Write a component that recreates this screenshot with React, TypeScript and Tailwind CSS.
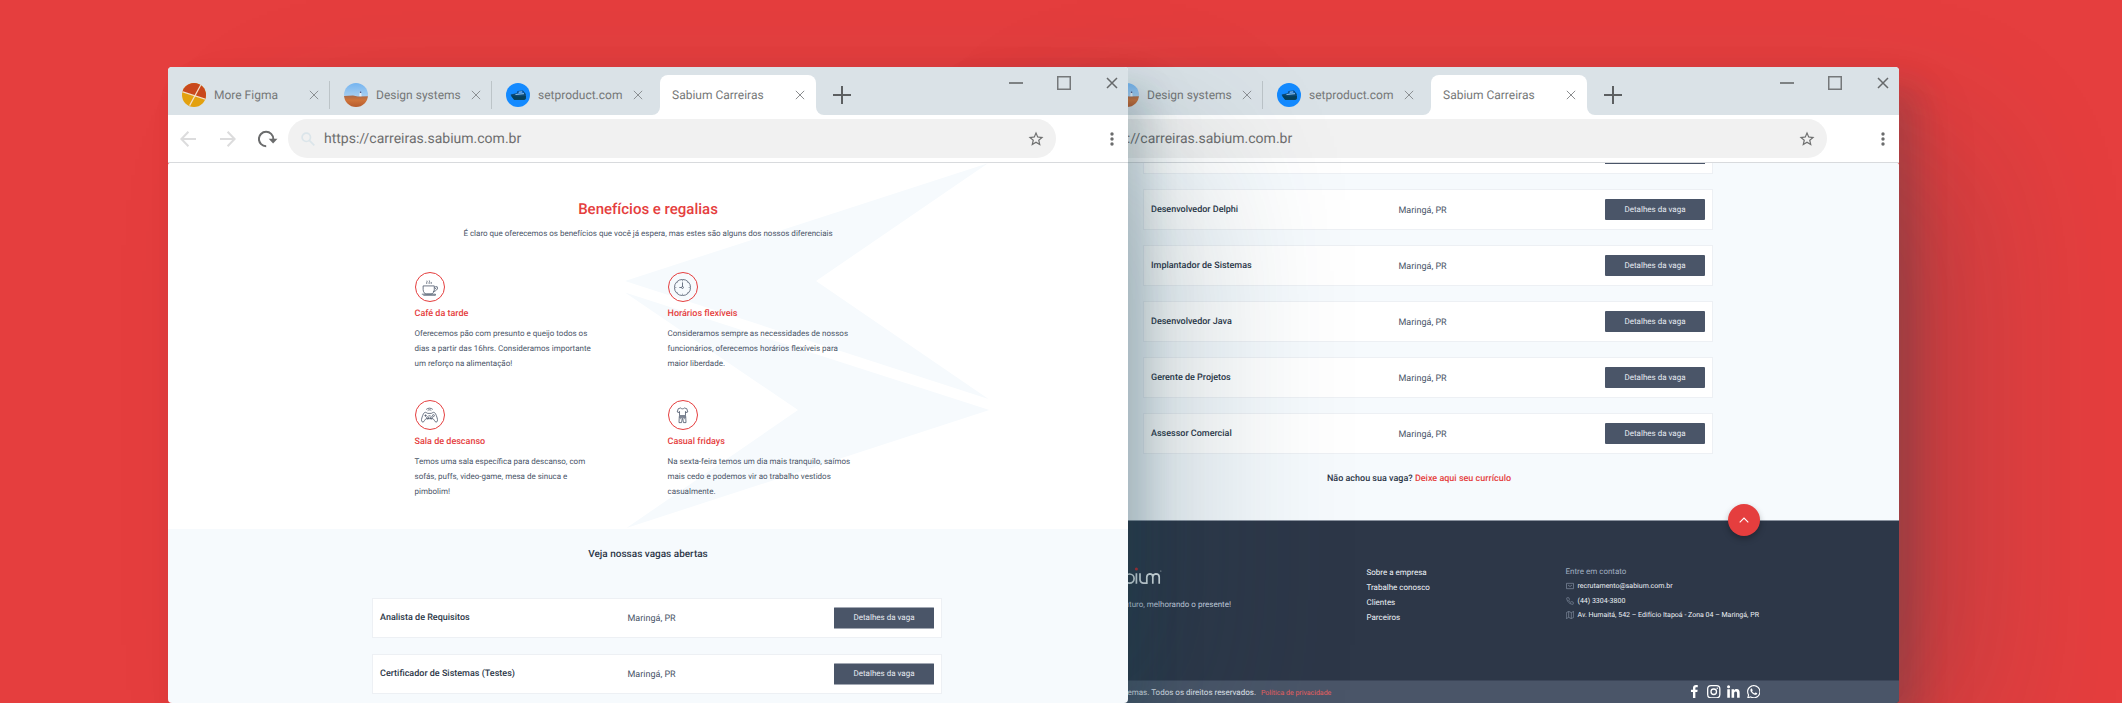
import type { ReactNode } from 'react';

function Cross({ className = '', width = 1.4 }: { className?: string; width?: number }) {
  return (
    <svg viewBox="0 0 12 12" className={`shrink-0 ${className}`} fill="none" stroke="currentColor" strokeWidth={width}>
      <path d="M1 1l10 10M11 1L1 11" />
    </svg>
  );
}

function FigmaFavicon() {
  return (
    <svg viewBox="0 0 24 24" className="h-6 w-6 shrink-0 rounded-full">
      <path fill="#e3a10f" d="M0 0h24v24H0z" />
      <path fill="#c9481d" d="M0 0h24v16.4L0 8.5z" />
      <path stroke="#f3dfc8" strokeWidth="1.2" d="M0 8.5l24 7.9M7.6 22.6L19.3 1" />
    </svg>
  );
}

function DesertFavicon() {
  return (
    <svg viewBox="0 0 24 24" className="h-6 w-6 shrink-0 rounded-full">
      <defs>
        <linearGradient id="sky" x1="0" y1="0" x2="0" y2="1">
          <stop offset="0" stopColor="#74b4f0" />
          <stop offset="1" stopColor="#a9cff0" />
        </linearGradient>
        <linearGradient id="sand" x1="0" y1="0" x2="0" y2="1">
          <stop offset="0" stopColor="#a8694a" />
          <stop offset="0.4" stopColor="#cf743b" />
          <stop offset="1" stopColor="#b65c2e" />
        </linearGradient>
      </defs>
      <path fill="url(#sky)" d="M0 0h24v14H0z" />
      <path fill="url(#sand)" d="M0 13l9-.4 5 .9 10-.2V24H0z" />
      <path fill="#e9eef5" d="M15.600 9.400h1.600l.4 3.800h-2.300z" />
      <circle cx="16.600" cy="9.200" r=".8" fill="#4b4a78" />
    </svg>
  );
}

function BoatFavicon() {
  return (
    <svg viewBox="0 0 24 24" className="h-6 w-6 shrink-0 rounded-full">
      <path fill="#148aff" d="M0 0h24v24H0z" />
      <path fill="#0b4a78" d="M4.600 11.500l6-1.300 1-2.200 5.400-.4 2.800 3.400.3 4.600-2.500 1.400H8.500z" />
      <path fill="#06405a" d="M4.600 12.200l7 1.400 8.500-.6-.8 3.800H8z" />
      <path fill="#1a6fd0" d="M11.800 8.600l4.700-.4 1.700 2.400-6.600.6z" />
      <path stroke="#b9e2ff" strokeWidth=".8" fill="none" d="M9.500 11.500l8.500-.8M13 9.200l3-.3" />
    </svg>
  );
}

function Tab({ icon, label, divider = true }: { icon: ReactNode; label: string; divider?: boolean }) {
  return (
    <div className={`flex h-7 w-[162px] shrink-0 items-center border-r pr-2.5 pl-3.5 ${divider ? 'border-[#bcc4c8]' : 'border-transparent'}`}>
      {icon}
      <span className="ml-2 flex-1 text-xs leading-[14px] whitespace-nowrap text-[#757777]">{label}</span>
      <Cross className="h-2.5 w-2.5 text-[#8b9093]" width={1.2} />
    </div>
  );
}

function Chrome() {
  return (
    <header className="flex h-24 shrink-0 flex-col overflow-hidden rounded-t-[4px] border-b border-[#d8dadd] bg-white">
      <div className="flex h-12 shrink-0 items-end bg-[#dae2e7]">
        <div className="flex h-10 items-center">
          <Tab icon={<FigmaFavicon />} label="More Figma" />
          <Tab icon={<DesertFavicon />} label="Design systems" />
          <Tab icon={<BoatFavicon />} label="setproduct.com" divider={false} />
        </div>
        <div className="-ml-0.5 h-2 w-2 bg-white">
          <div className="h-2 w-2 rounded-br-[8px] bg-[#dae2e7]" />
        </div>
        <div className="flex h-10 w-[156px] shrink-0 items-center rounded-t-[8px] bg-white pr-[11px] pl-3">
          <span className="flex-1 text-xs leading-[14px] whitespace-nowrap text-[#757777]">Sabium Carreiras</span>
          <Cross className="h-2.5 w-2.5 text-[#8b8d8f]" width={1.2} />
        </div>
        <div className="h-2 w-2 bg-white">
          <div className="h-2 w-2 rounded-bl-[8px] bg-[#dae2e7]" />
        </div>
        <svg viewBox="0 0 18 18" className="mb-[11px] ml-[9px] h-[18px] w-[18px]" stroke="#5c5f61" strokeWidth="2">
          <path d="M9 0v18M0 9h18" />
        </svg>
        <div className="mt-[9px] mr-[9px] ml-auto flex items-center gap-[34px] self-start">
          <svg viewBox="0 0 14 14" className="h-3.5 w-3.5" stroke="#7d8183" strokeWidth="1.800">
            <path d="M0 7h14" />
          </svg>
          <svg viewBox="0 0 14 14" className="h-3.5 w-3.5" fill="none" stroke="#75787a" strokeWidth="1.500">
            <path d="M.75.75h12.500v12.500H.75z" />
          </svg>
          <Cross className="m-px h-3 w-3 text-[#66696b]" width={1.5} />
        </div>
      </div>
      <div className="flex flex-1 items-center pl-3">
        <svg viewBox="0 0 16 16" className="h-4 w-4" fill="none" stroke="#dcdcdd" strokeWidth="2">
          <path d="M8.400.8L1.400 8l7 7.200M1.400 8H16" />
        </svg>
        <svg viewBox="0 0 16 16" className="ml-6 h-4 w-4" fill="none" stroke="#dcdcdd" strokeWidth="2">
          <path d="M7.600.8l7 7.200-7 7.200M14.600 8H0" />
        </svg>
        <svg viewBox="0 0 20 18" className="ml-[22px] h-[18px] w-5" fill="none" stroke="#6b6c6d" strokeWidth="2">
          <path d="M8.200 16.200A7.200 7.200 0 1 1 15.300 9" />
          <path d="M10.700 8.800h8.800l-4.400 4.800z" fill="#6b6c6d" stroke="none" />
        </svg>
        <div className="ml-2.5 flex h-[39px] w-[768px] items-center rounded-full bg-[#f1f1f1] pr-[11px] pl-[13px]">
          <svg viewBox="0 0 14 14" className="h-3.5 w-3.5" fill="none" stroke="#dbe5ea" strokeWidth="1.700">
            <circle cx="5.300" cy="5.300" r="4.200" />
            <path d="M8.300 8.300l5 5" />
          </svg>
          <span className="ml-[9px] flex-1 text-sm leading-4 text-[#6e6e6e]">https://carreiras.sabium.com.br</span>
          <svg viewBox="0 0 24 24" className="h-[18px] w-[18px]" fill="#6f7070">
            <path d="M22 9.240l-7.190-.62L12 2 9.190 8.630 2 9.240l5.460 4.730L5.820 21 12 17.270 18.180 21l-1.630-7.030L22 9.240zM12 15.400l-3.760 2.270 1-4.280-3.320-2.880 4.380-.38L12 6.100l1.710 4.040 4.380.38-3.320 2.880 1 4.280L12 15.400z" />
          </svg>
        </div>
        <svg viewBox="0 0 4 14" className="ml-[54px] h-3.5 w-1" fill="#6b6c6d">
          <circle cx="2" cy="2" r="1.700" />
          <circle cx="2" cy="7" r="1.700" />
          <circle cx="2" cy="12" r="1.700" />
        </svg>
      </div>
    </header>
  );
}

function BrowserWindow({ left, children }: { left: string; children: ReactNode }) {
  return (
    <section
      className={`absolute top-[67px] flex h-[636px] w-[960px] flex-col rounded-[4px] shadow-[90px_60px_150px_-20px_rgba(26,66,80,0.2),30px_26px_60px_rgba(26,66,80,0.07),20px_20px_32px_-2px_rgba(26,66,80,0.17)] ${left}`}
    >
      <Chrome />
      <div className="relative flex flex-1 flex-col overflow-hidden rounded-t-[1.500px] rounded-b-[4px]">{children}</div>
    </section>
  );
}

function CupIcon() {
  return (
    <>
      <path d="M2 6.500h10.500v3.300c0 2.500-1.500 4.300-3 4.300H5c-1.500 0-3-1.800-3-4.300zM12.600 8c2.400-2 3.800-.3 2.800 1.300-.8 1.500-2.400 2.300-4 2.600M.8 14.300h12.800v1H2.200M13 9.600l1.600-1.400" />
      <path d="M5.500 4.600c-1-1.200.9-1.700 0-3M7.800 4.600c-1-1.200.9-1.700 0-3.200M9.600 4.600V2.800" />
    </>
  );
}

function ClockIcon() {
  return (
    <>
      <circle cx="8" cy="8" r="7.600" />
      <path d="M8 3.200v4M5 8h2.100" />
      <circle cx="8" cy="8" r=".9" />
      <path d="M8 1.300v.8M8 13.900v.8M1.300 8h.8M13.900 8h.8M3.300 3.300l.4.4M12.700 3.300l-.4.400M3.300 12.700l.4-.4M12.700 12.700l-.4-.4" />
    </>
  );
}

function GamepadIcon() {
  return (
    <>
      <path d="M4.300 5C2.500 5 1.900 7 .8 10.300c-.7 2.200-.3 3.900 1 3.900 1.500 0 1.700-3.200 3.400-3.200h5.600c1.700 0 1.900 3.200 3.400 3.200 1.300 0 1.700-1.700 1-3.900C14.100 7 13.500 5 11.700 5c-1 0-1.300 1-2 1H6.300c-.7 0-1-1-2-1z" />
      <path d="M6.300 3.400c.8-1 2.600-1 3.400 0M4.900 2.300c1.700-1.600 4.500-1.600 6.200 0M4.300 7v2.200M3.200 8.100h2.200M7 8.300h2" />
      <circle cx="11.700" cy="8.100" r=".9" />
      <circle cx="6.300" cy="10.200" r="1" />
      <circle cx="9.700" cy="10.200" r="1" />
    </>
  );
}

function OutfitIcon() {
  return (
    <>
      <path d="M6.300.9L4 1.600 3 4.700l1.800.5.4-1v4h5.600v-4l.4 1 1.800-.5-1-3.100L9.700.9C9 2 7 2 6.300.9z" />
      <path d="M5 8.700h6l.3 6H8.900l-.7-4h-.4l-.7 4H4.700zM5.100 9.700h5.800M6.400 10v1.500M9.600 10v1.500" />
    </>
  );
}

const benefits = [
  {
    icon: <CupIcon />,
    title: 'Café da tarde',
    lines: ['Oferecemos pão com presunto e queijo todos os', 'dias a partir das 16hrs. Consideramos importante', 'um reforço na alimentação!'],
  },
  {
    icon: <ClockIcon />,
    title: 'Horários flexíveis',
    lines: ['Consideramos sempre as necessidades de nossos', 'funcionários, oferecemos horários flexíveis para', 'maior liberdade.'],
  },
  {
    icon: <GamepadIcon />,
    title: 'Sala de descanso',
    lines: ['Temos uma sala específica para descanso, com', 'sofás, puffs, video-game, mesa de sinuca e', 'pimbolim!'],
  },
  {
    icon: <OutfitIcon />,
    title: 'Casual fridays',
    lines: ['Na sexta-feira temos um dia mais tranquilo, saímos', 'mais cedo e podemos vir ao trabalho vestidos', 'casualmente.'],
  },
];

function JobCard({ name, half = false }: { name: string; half?: boolean }) {
  return (
    <li
      className={`ml-[204px] flex w-[570px] shrink-0 items-center border border-[#edf0f4] bg-white px-[7px] ${half ? 'mb-4 h-10' : 'mb-[15px] h-[41px]'}`}
    >
      <span className="w-[247.500px] text-[9px] leading-3 font-medium whitespace-nowrap text-[#2d3748]">{name}</span>
      <span className="pt-0.5 text-[9px] leading-3 text-[#4a5568]">Maringá, PR</span>
      <span
        className={`ml-auto flex w-[100px] items-center justify-center rounded-[1px] bg-[#4a5568] text-[8px] leading-[10px] text-[#e6ebf2] ${half ? 'h-[22px] border-y border-[#a2a8b3]' : 'h-[21px]'}`}
      >
        Detalhes da vaga
      </span>
    </li>
  );
}

function BenefitsPage() {
  return (
    <>
      <div className="relative flex h-[365.500px] shrink-0 flex-col bg-white">
        <svg viewBox="0 0 960 365" className="absolute inset-x-0 top-0 h-[365px] w-[960px]" fill="#f6fafd">
          <path d="M457 118L820 .2 648 118l172.500 118z" />
          <path d="M457 129.500L821.300 247 458.500 365 630 247z" />
        </svg>
        <div className="relative flex flex-col items-center pt-9">
          <h2 className="text-[15px] leading-[20px] font-medium text-[#e53e3e]">Benefícios e regalias</h2>
          <p className="mt-2.5 text-[8px] leading-[10px] text-[#4a5568]">
            É claro que oferecemos os benefícios que você já espera, mas estes são alguns dos nossos diferenciais
          </p>
        </div>
        <div className="relative mt-[33px] ml-[246.500px] grid grid-cols-[253px_253px]">
          {benefits.map((b) => (
            <article key={b.title} className="h-32">
              <div className="flex h-[30px] w-[30px] items-center justify-center rounded-full border border-[#e53e3e]">
                <svg viewBox="0 0 16 16" className="h-[17px] w-[17px]" fill="none" stroke="#4a5568" strokeWidth=".75">
                  {b.icon}
                </svg>
              </div>
              <h3 className="mt-1.5 text-[9px] leading-3 font-medium text-[#e53e3e]">{b.title}</h3>
              <p className="mt-[6px] text-[8px] leading-[15px] whitespace-nowrap text-[#4a5568]">
                {b.lines.map((line) => (
                  <span key={line} className="block">
                    {line}
                  </span>
                ))}
              </p>
            </article>
          ))}
        </div>
      </div>
      <div className="flex-1 bg-[#f6fafd]">
        <h2 className="pt-5 text-center text-[10px] leading-3 font-medium text-[#2d3748]">Veja nossas vagas abertas</h2>
        <ul className="mt-[37.500px]">
          <JobCard name="Analista de Requisitos" half />
          <JobCard name="Certificador de Sistemas (Testes)" half />
        </ul>
      </div>
    </>
  );
}

const openJobs = ['Desenvolvedor Delphi', 'Implantador de Sistemas', 'Desenvolvedor Java', 'Gerente de Projetos', 'Assessor Comercial'];

function SabiumLogo() {
  return (
    <svg viewBox="0 0 60 20" className="h-5 w-[60px]" fill="none" stroke="#e6ebee" strokeWidth="1.700">
      <path d="M8 8.200H3.500a2 2 0 0 0 0 4.400h2.800a2.300 2.300 0 0 1 0 4.600H1" />
      <circle cx="15.500" cy="12.600" r="4.600" />
      <path d="M20.200 8v9.500" />
      <circle cx="27.500" cy="12.600" r="4.600" />
      <path d="M22.900 3v10M34.400 7.200V17.800M38 7.200v6.300a3.500 3.500 0 0 0 3.800 3.700h3V11a3.300 3.300 0 0 1 3-3.200c2 0 3 1.300 3 3.200v6.800M50.800 11a3.300 3.300 0 0 1 3-3.200c2 0 3.400 1.300 3.400 3.200v6.800" />
      <circle cx="34.400" cy="3" r="1.500" fill="#c5282b" stroke="none" />
      <circle cx="58.800" cy="5" r=".6" fill="#cfd6da" stroke="none" />
    </svg>
  );
}

function SmallIcon({ children }: { children: ReactNode }) {
  return (
    <svg viewBox="0 0 24 24" className="h-2 w-2 shrink-0" fill="none" stroke="#8793a5" strokeWidth="2">
      {children}
    </svg>
  );
}

function Footer() {
  return (
    <footer className="relative flex h-[183px] shrink-0 flex-col border-t border-[#8b93a0] bg-[#2d3748]">
      <span className="absolute -top-[17px] left-[789px] flex h-8 w-8 items-center justify-center rounded-full bg-[#e53e3e] shadow-[0_3px_6px_rgba(0,0,0,0.28)]">
        <svg viewBox="0 0 10 6" className="h-1.5 w-2.5" fill="none" stroke="#ffffff" strokeWidth="1.100">
          <path d="M.7 5.300L5 1l4.300 4.300" />
        </svg>
      </span>
      <div className="flex h-[159px] pt-[43px] pl-[132px]">
        <div className="flex w-[160px] flex-col items-end pt-0.5">
          <div className="mr-[69.500px]">
            <SabiumLogo />
          </div>
          <p className="mt-[11px] text-[8px] leading-[15px] whitespace-nowrap text-[#cbd5e0]">Construindo o futuro, melhorando o presente!</p>
        </div>
        <ul className="ml-[135.500px] w-[199px] pt-px text-[8px] leading-[15px] text-[#edf2f7]">
          <li>Sobre a empresa</li>
          <li>Trabalhe conosco</li>
          <li>Clientes</li>
          <li>Parceiros</li>
        </ul>
        <div className="text-[7px] whitespace-nowrap text-[#edf2f7]">
          <h4 className="text-[8px] leading-[15px] text-[#a0aec0]">Entre em contato</h4>
          <p className="flex h-[14.500px] items-center gap-1">
            <SmallIcon>
              <path d="M1.500 4h21v16h-21zM6 9l6 4.500L18 9" />
            </SmallIcon>
            recrutamento@sabium.com.br
          </p>
          <p className="flex h-[14.500px] items-center gap-1">
            <SmallIcon>
              <path d="M22 16.920v3a2 2 0 0 1-2.180 2 19.790 19.790 0 0 1-8.630-3.070 19.500 19.500 0 0 1-6-6 19.790 19.790 0 0 1-3.070-8.670A2 2 0 0 1 4.110 2h3a2 2 0 0 1 2 1.720c.127.960.361 1.903.700 2.810a2 2 0 0 1-.450 2.110L8.090 9.910a16 16 0 0 0 6 6l1.270-1.270a2 2 0 0 1 2.110-.450c.907.339 1.850.573 2.810.700A2 2 0 0 1 22 16.920z" />
            </SmallIcon>
            (44) 3304-3800
          </p>
          <p className="flex h-[14.500px] items-center gap-1">
            <SmallIcon>
              <path d="M1 5v18l7-4 8 4 7-4V1l-7 4-8-4zM8 1v18M16 5v18" />
            </SmallIcon>
            Av. Humaitá, 542 – Edifício Itapoá - Zona 04 – Maringá, PR
          </p>
        </div>
      </div>
      <div className="flex flex-1 items-center border-t border-[#3c4659] bg-[#4a5568] pr-[139px]">
        <div className="flex w-[317px] justify-end pt-0.5 text-[8px] whitespace-nowrap text-[#e2e8f0]">© 2020 Sabium Sistemas. Todos os direitos reservados.</div>
        <a className="ml-[5px] pt-0.5 text-[7px] text-[#e8605f]">Política de privacidade</a>
        <div className="-mt-px ml-auto flex items-center gap-[6.500px]">
          <svg viewBox="0 0 24 24" className="h-[13px] w-[13px]" fill="#ffffff">
            <path d="M9.200 24V13.100H5.500V8.800h3.700V5.600C9.200 1.900 11.400 0 14.700 0c1.600 0 2.900.1 3.300.2v3.900h-2.300c-1.800 0-2.100.9-2.100 2.100v2.600h4.200l-.6 4.300h-3.600V24z" />
          </svg>
          <svg viewBox="0 0 24 24" className="h-[13.500px] w-[13.500px]" fill="none" stroke="#ffffff" strokeWidth="2.300">
            <rect x="1.200" y="1.200" width="21.600" height="21.600" rx="6" />
            <circle cx="12" cy="12" r="4.900" />
            <circle cx="18.200" cy="5.800" r="1.300" fill="#ffffff" stroke="none" />
          </svg>
          <svg viewBox="0 0 24 24" className="h-[13px] w-[13px]" fill="#ffffff">
            <path d="M.5 8h4.800v15.500H.5zM2.900.4a2.800 2.800 0 1 1 0 5.600 2.800 2.800 0 0 1 0-5.600zM8.400 8H13v2.100h.1c.6-1.200 2.200-2.500 4.500-2.500 4.900 0 5.800 3.200 5.800 7.400v8.500h-4.800V16c0-1.800 0-4.100-2.500-4.100s-2.900 2-2.900 4v7.600H8.400z" />
          </svg>
          <svg viewBox="0 0 24 24" className="h-[13.500px] w-[13.500px]" fill="#ffffff">
            <path d="M17.472 14.382c-.297-.149-1.758-.867-2.030-.967-.273-.099-.471-.148-.670.150-.197.297-.767.966-.940 1.164-.173.199-.347.223-.644.075-.297-.150-1.255-.463-2.390-1.475-.883-.788-1.480-1.761-1.653-2.059-.173-.297-.018-.458.130-.606.134-.133.298-.347.446-.520.149-.174.198-.298.298-.497.099-.198.050-.371-.025-.520-.075-.149-.669-1.612-.916-2.207-.242-.579-.487-.500-.669-.510-.173-.008-.371-.010-.570-.010-.198 0-.520.074-.792.372-.272.297-1.040 1.016-1.040 2.479 0 1.462 1.065 2.875 1.213 3.074.149.198 2.096 3.200 5.077 4.487.709.306 1.262.489 1.694.625.712.227 1.360.195 1.871.118.571-.085 1.758-.719 2.006-1.413.248-.694.248-1.289.173-1.413-.074-.124-.272-.198-.570-.347m-5.421 7.403h-.004a9.870 9.870 0 01-5.031-1.378l-.361-.214-3.741.982.998-3.648-.235-.374a9.860 9.860 0 01-1.510-5.260c.001-5.450 4.436-9.884 9.888-9.884 2.640 0 5.122 1.030 6.988 2.898a9.825 9.825 0 012.893 6.994c-.003 5.450-4.437 9.884-9.885 9.884m8.413-18.297A11.815 11.815 0 0012.050 0C5.495 0 .160 5.335.157 11.892c0 2.096.547 4.142 1.588 5.945L.057 24l6.305-1.654a11.882 11.882 0 005.683 1.448h.005c6.554 0 11.890-5.335 11.893-11.893a11.821 11.821 0 00-3.480-8.413z" />
          </svg>
        </div>
      </div>
    </footer>
  );
}

function JobsPage() {
  return (
    <>
      <div className="flex flex-1 flex-col bg-[#f6fafd]">
        <ul className="flex flex-col">
          <li className="mb-[15px] ml-[204px] flex h-[11px] w-[570px] shrink-0 justify-end border border-t-0 border-[#edf0f4] bg-white pr-[7px]">
            <span className="h-px w-[100px] bg-[#4a5568]" />
          </li>
          {openJobs.map((name) => (
            <JobCard key={name} name={name} />
          ))}
        </ul>
        <p className="mt-1 text-center text-[9px] leading-3 font-medium text-[#2d3748]">
          Não achou sua vaga? <a className="text-[#e53e3e]">Deixe aqui seu currículo</a>
        </p>
      </div>
      <Footer />
    </>
  );
}

export default function App() {
  return (
    <main className="relative h-[703px] w-[2122px] overflow-hidden bg-[#e53e3e] font-['Roboto',sans-serif] [text-rendering:geometricPrecision]">
      <BrowserWindow left="left-[939px]">
        <JobsPage />
      </BrowserWindow>
      <BrowserWindow left="left-[168px]">
        <BenefitsPage />
      </BrowserWindow>
    </main>
  );
}
